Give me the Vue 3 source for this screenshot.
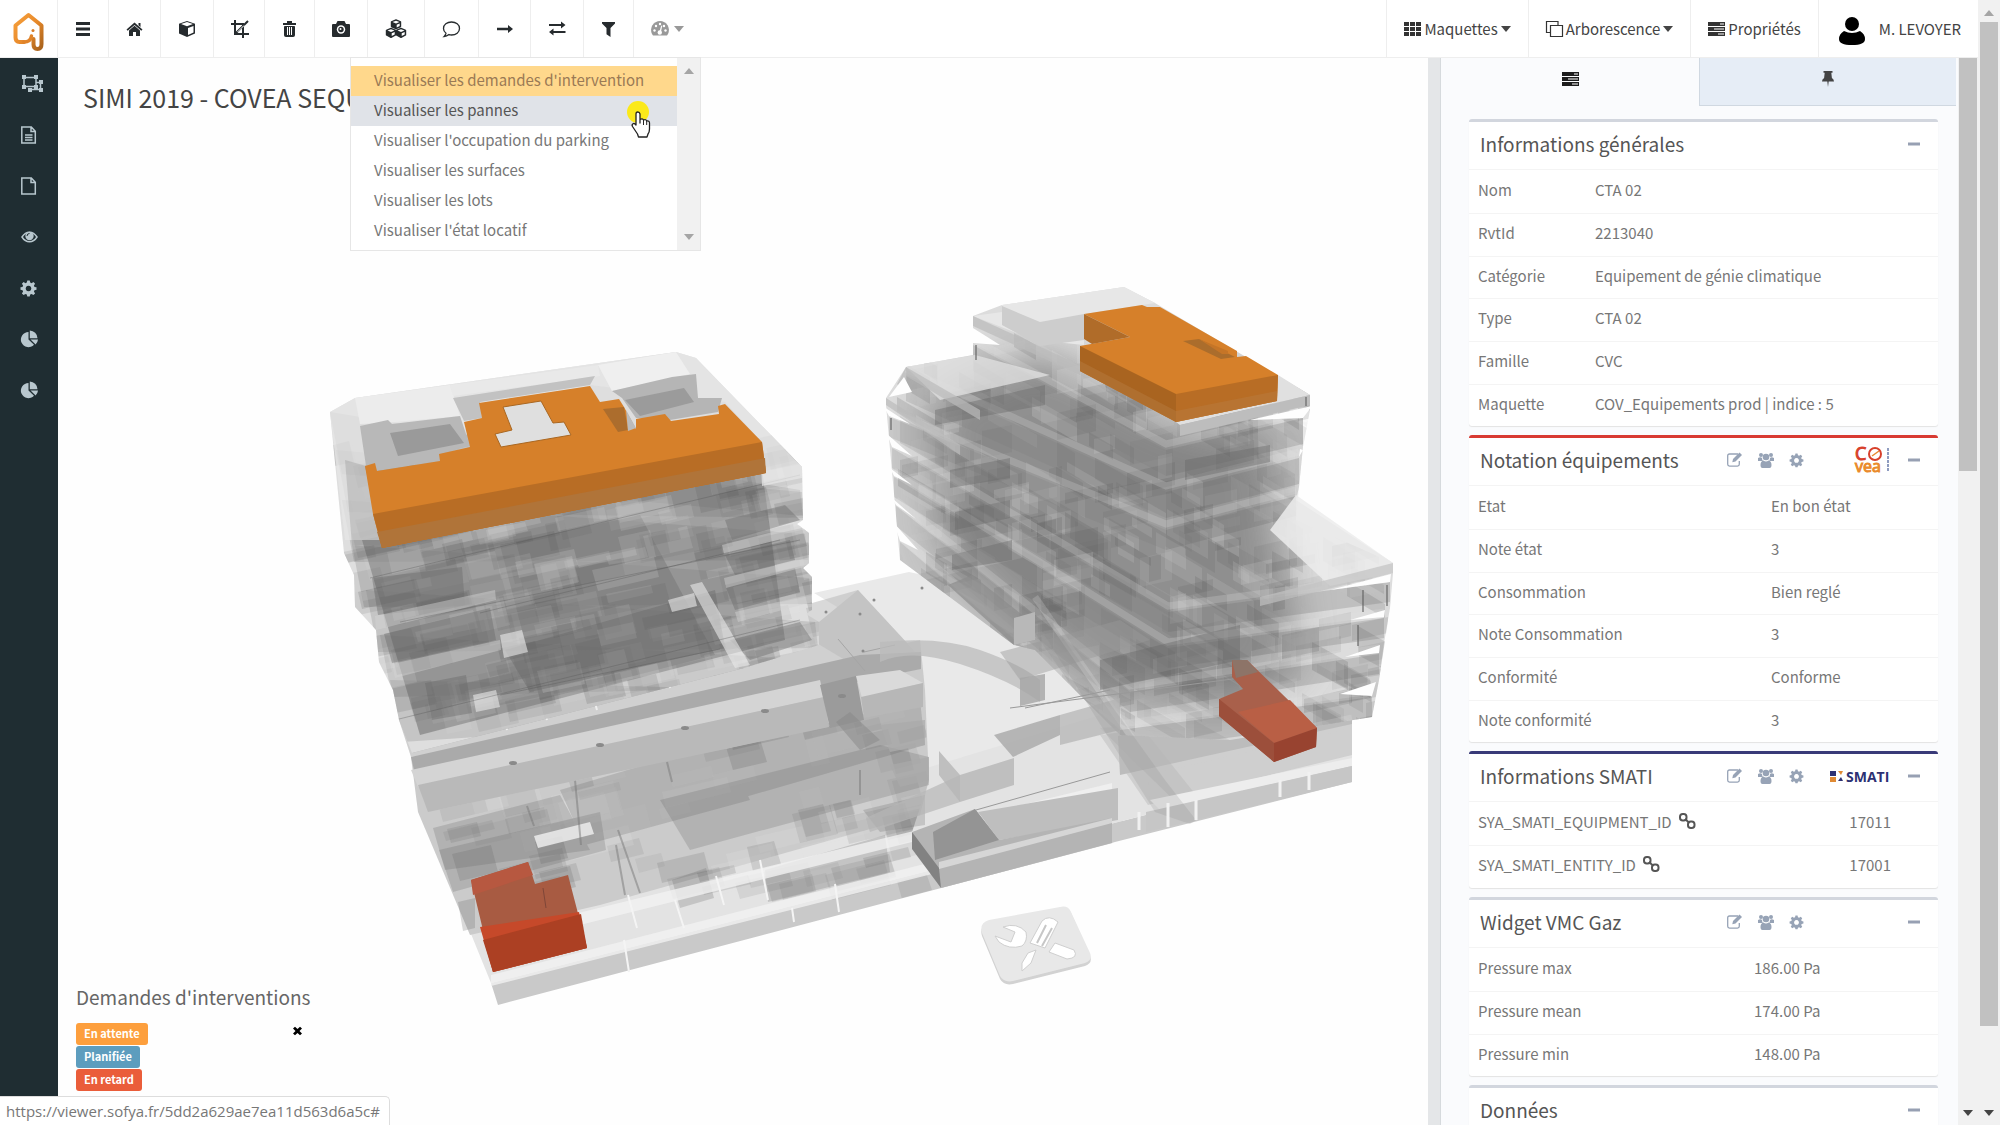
<script setup>
import { ref } from 'vue'

const icons = {
  menu: '<path d="M0 2h14v3H0zM0 7.500h14v3H0zM0 13h14v3H0z"/>',
  home: '<path d="M7.500 2.500l8 7-1.200 1.300L7.500 5 .7 10.800-.5 9.500zM11.500 3h2v4l-2-1.800zM2 10.500l5.500-4.700 5.500 4.700V16H9v-4H6v4H2z"/>',
  cube: '<path d="M8 1l8 2.800v9.700L8 17l-8-3.500V3.800z"/><path d="M2 4l6-2 6 2-6 2.200zM9 8l5.500-2v6.500L9 15z" fill="#fff"/>',
  crop: '<path d="M3 0v14h14M-1 4h12v14M4 13L16 1" fill="none" stroke="currentColor" stroke-width="2"/><path d="M5.500 12L12 5.500" stroke="#fff"/>',
  trash: '<path d="M0 3h13v2H0zM4 3V1h5v2" /><path d="M1.500 6.500h10v9q0 1-1 1h-8q-1 0-1-1zM4.500 7.500v7M6.500 7.500v7M8.500 7.500v7" stroke="currentColor"/><path d="M4.500 7v8M6.500 7v8M8.500 7v8" stroke="#fff" stroke-width="1"/>',
  camera: '<path d="M0 4h3l1.500-3h7L13 4h3q1 0 1 1v11q0 1-1 1H0q-1 0-1-1V5q0-1 1-1z"/><circle cx="8" cy="9.500" r="4.200" fill="#fff"/><circle cx="8" cy="9.500" r="2.700"/><circle cx="7.500" cy="9" r="1" fill="#fff"/>',
  cubes: '<g stroke="currentColor" stroke-width="1.400" stroke-linejoin="round"><path d="M10 0l4.500 1.800v4.700L10 8.700 5.500 6.500V1.800z"/><path d="M5 8.500l4.500 1.800V15L5 17.300.5 15v-4.700zM15 8.500l4.500 1.800V15L15 17.300 10.500 15v-4.700z"/></g><path d="M6.500 2L10 .7 13.500 2 10 3.400zM10.700 4.800l3-1.200V6l-3 1.400zM1.500 10.500L5 9.200l3.500 1.300L5 12zM5.700 13.200l3-1.200v2.500l-3 1.400zM11.500 10.500L15 9.200l3.500 1.300L15 12zM15.700 13.200l3-1.200v2.500l-3 1.400z" fill="#fff"/>',
  comment: '<path d="M8.500 2C13 2 16.500 4.700 16.500 8.500S13 15 8.500 15q-1.400 0-2.500-.4Q3.700 16.500 1 16.600 2.700 15 3 13.200 .5 11.500 .5 8.500C.5 4.700 4 2 8.500 2z" fill="none" stroke="currentColor" stroke-width="1.300"/>',
  arrow: '<path d="M0 7.800h11V5l5 4-5 4v-2.800H0z"/>',
  swap: '<path d="M0 4h12V1.500L16.500 5 12 8.500V6H0zM16.500 11h-12V8.500L0 12l4.500 3.500V13h12z"/>',
  filter: '<path d="M0 2h13v1.500L8.500 8v9l-4-2.800V8L0 3.500z"/>',
  gauge: '<path d="M9 1a9 9 0 0 1 8 13l-1 1.500H2L1 14A9 9 0 0 1 9 1z"/><g fill="#fff"><circle cx="3.500" cy="10.500" r="1.200"/><circle cx="5" cy="6" r="1.200"/><circle cx="9" cy="4" r="1.200"/><circle cx="13" cy="6" r="1.200"/><circle cx="14.500" cy="10.500" r="1.200"/><circle cx="8.800" cy="12.500" r="2.200"/><path d="M8.300 12l2-6.500 1 .3-1.500 6.500z"/></g>',
  grid: '<path d="M0 2h5v4H0zM6 2h5v4H6zM12 2h5v4h-5zM0 7h5v4H0zM6 7h5v4H6zM12 7h5v4h-5zM0 12h5v4H0zM6 12h5v4H6zM12 12h5v4h-5z"/>',
  copy: '<path d="M4.500 5.500h12v11h-12zM4.500 12.500h-4v-11h11.500v4" fill="none" stroke="currentColor" stroke-width="1.200"/>',
  server: '<path d="M0 2h17v4H0zM0 7h17v4H0zM0 12h17v4H0z"/><path d="M12 3.500h4v1h-4zM6 8.500h10v1H6zM10 13.500h6v1h-6z" fill="#fff"/>',
  pin: '<path d="M1.500 1h9v1.800H9.300l.6 5.200Q12 9.200 12 11.500H6.700L6 17l-.7-5.500H0Q0 9.200 2.100 8l.6-5.200H1.500z"/>',
  group: '<path d="M3 2.500h12v9H3zM9 14.500h10.500v-7H15" fill="none" stroke="currentColor" stroke-width="1.500"/><path d="M1 0h4v4H1zM13 0h4v4h-4zM1 10h4v4H1zM13 10h4v4h-4zM18 5h4v4h-4zM18 13h4v4h-4zM7 13h4v4H7z"/>',
  doc: '<path d="M.8 1h9.500l4 4.200V17H.8zM10 1v4.500h4.300M4 9h7.500M4 11.500h7.500M4 14h7.500" fill="none" stroke="currentColor" stroke-width="1.500"/>',
  file: '<path d="M.8 1h9.500l4 4.200V17H.8zM10 1v4.500h4.300" fill="none" stroke="currentColor" stroke-width="1.500"/>',
  eye: '<path d="M1 9q3-4.800 7.500-4.800T16 9q-3 4.800-7.500 4.800T1 9z" fill="none" stroke="currentColor" stroke-width="1.500"/><circle cx="8.500" cy="8" r="4.200"/><path d="M6 8q0-2.500 2.500-2.500" fill="none" stroke="#1f2d32"/>',
  gear: '<path fill-rule="evenodd" d="M6.300 1.500h2.400l.5 2.100 1.300.6 1.900-1.200 1.700 1.700-1.200 1.900.6 1.300 2 .4v2.500l-2 .5-.6 1.300 1.200 1.800-1.700 1.700-1.900-1.100-1.300.5-.5 2H6.300l-.5-2-1.300-.5-1.900 1.100-1.700-1.700 1.200-1.800-.6-1.300-2-.5V8.300l2-.4.6-1.300L.9 4.700 2.600 3l1.900 1.200 1.300-.6zM7.500 6.700a2.800 2.800 0 1 0 .01 0z"/>',
  pie: '<path d="M7.500 2v7.500l5.500 5.300A7.600 7.600 0 1 1 7.500 2zM8.800.5a8 8 0 0 1 7.700 7.700H8.800zM9.500 9.500H17a8 8 0 0 1-2.400 5z"/>',
  edit: '<path d="M11 3H2.500Q.7 3 .7 4.800v8.500q0 1.800 1.800 1.800h8q1.800 0 1.800-1.800V10" fill="none" stroke="currentColor" stroke-width="1.300"/><path d="M12.500 1.500L15 4l-6.500 6.500L5.300 11.200 6 8z"/>',
  users: '<circle cx="3" cy="4" r="2"/><circle cx="13" cy="4" r="2"/><circle cx="8" cy="6" r="3.300"/><path d="M0 7q2.500-1.500 4 0 0 2 1 3H0zM16 7q-2.500-1.500-4 0 0 2-1 3h5zM5.500 9.500q2.500 1.800 5 0Q13.500 10 13.500 14q0 3-2 3h-7q-2 0-2-3 0-4 3-4.500z"/>',
  minus: '<path d="M0 7.500h12v3H0z"/>',
  link: '<g fill="none" stroke="currentColor" stroke-width="2"><rect x="1" y="2" width="6.500" height="6.500" rx="2.800"/><rect x="9" y="9.500" width="6.500" height="6.500" rx="2.800"/><path d="M6 7l4.500 4"/></g>',
  close: '<path d="M0 2.500L2 .8 4.500 3 7 .8l2 1.700L6.500 5 9 7.500l-2 1.700L4.500 7 2 9.200 0 7.500 2.500 5z"/>',
}

const tools = [
  ['home', 15, 'Accueil'], ['cube', 16, 'Vue 3D'], ['crop', 14, 'Coupe'], ['trash', 13, 'Supprimer'],
  ['camera', 16, 'Capture'], ['cubes', 20, 'Objets'], ['comment', 17, 'Commentaire'], ['arrow', 15, 'Suivant'],
  ['swap', 16, 'Comparer'], ['filter', 13, 'Filtrer'],
]
const side = [
  ['group', 22, 'Sélection'], ['doc', 15, 'Document'], ['file', 15, 'Fichier'], ['eye', 17, 'Affichage'],
  ['gear', 15, 'Réglages'], ['pie', 17, 'Statistiques'], ['pie', 17, 'Rapports'],
]
const views = [
  ["Visualiser les demandes d'intervention", 'current'],
  ['Visualiser les pannes', 'hover'],
  ["Visualiser l'occupation du parking", ''],
  ['Visualiser les surfaces', ''],
  ['Visualiser les lots', ''],
  ["Visualiser l'état locatif", ''],
]
const cards = ref([
  { title: 'Informations générales', kind: 'general', rows: [['Nom', 'CTA 02'], ['RvtId', '2213040'], ['Catégorie', 'Equipement de génie climatique'], ['Type', 'CTA 02'], ['Famille', 'CVC'], ['Maquette', 'COV_Equipements prod | indice : 5']] },
  { title: 'Notation équipements', kind: 'rating', tools: true, logo: 'covea', rows: [['Etat', 'En bon état'], ['Note état', '3'], ['Consommation', 'Bien reglé'], ['Note Consommation', '3'], ['Conformité', 'Conforme'], ['Note conformité', '3']] },
  { title: 'Informations SMATI', kind: 'smati', tools: true, logo: 'smati', link: true, rows: [['SYA_SMATI_EQUIPMENT_ID', '17011'], ['SYA_SMATI_ENTITY_ID', '17001']] },
  { title: 'Widget VMC Gaz', kind: 'gas', tools: true, rows: [['Pressure max', '186.00 Pa'], ['Pressure mean', '174.00 Pa'], ['Pressure min', '148.00 Pa']] },
  { title: 'Données', kind: 'data', rows: [] },
])

// Rooms seen through the translucent storeys: seeded so that every render is alike.
let seed = 11
const rnd = () => (seed = (seed * 16807) % 2147483647) / 2147483647
function rooms(n, box, dirs, size, dark) {
  const out = []
  for (let i = 0; i < n; i++) {
    const [dx, dy, vx] = dirs[Math.floor(rnd() * dirs.length)]
    const x = box[0] + rnd() * box[2]
    const y = box[1] + rnd() * box[3]
    const w = size * (0.3 + rnd())
    const h = 8 + rnd() * 22
    const tone = rnd() < dark ? '#555' : '#e6e6e6'
    const pts = [[x, y], [x + w * dx, y + w * dy], [x + w * dx + h * vx, y + w * dy + h], [x + h * vx, y + h]]
    out.push({ p: pts.map((q) => q.map(Math.round).join(',')).join(' '), f: tone, o: 0.07 + rnd() * 0.13 })
  }
  return out
}
const leftRooms = rooms(320, [330, 440, 480, 270], [[1, -0.22, 0.25]], 56, 0.58)
const baseRooms = rooms(110, [430, 700, 500, 190], [[1, -0.24, 0.28]], 52, 0.6)
const rightRooms = rooms(460, [890, 330, 480, 390], [[1, -0.22, 0], [1, 0.58, 0]], 38, 0.55)

// One storey: left end, front corner, right end, height.
function storey(lx, ly, cx, cy, rx, ry, h) {
  return {
    left: `${lx},${ly} ${cx},${cy} ${cx},${cy + h} ${lx},${ly + h}`,
    right: `${cx},${cy} ${rx},${ry} ${rx},${ry + h} ${cx},${cy + h}`,
    gap: `${lx},${ly - 6} ${cx},${cy - 6} ${rx},${ry - 6}`,
  }
}
const storeys = [
  storey(973, 345, 1166, 450, 1303, 418, 26), storey(906, 375, 1166, 492, 1299, 458, 26),
  storey(889, 417, 1166, 530, 1296, 496, 20), storey(892, 448, 1168, 612, 1390, 582, 20),
  storey(894, 477, 1168, 648, 1384, 618, 20), storey(896, 506, 1130, 692, 1379, 654, 20),
  storey(900, 542, 1120, 730, 1372, 697, 22), storey(1035, 603, 1150, 770, 1352, 724, 30),
]
const slabs = [
  [330, 412, 803, 490], [336, 450, 805, 492], [342, 500, 808, 534], [352, 545, 812, 578], [366, 590, 818, 622], [380, 635, 818, 660], [390, 680, 790, 690],
].map(([x, y, rx, ry]) => `${x},${y} ${x + 12},${y + 62} ${rx},${ry + 26} ${rx - 3},${ry}`)
</script>

<template>
  <div class="app">
    <div class="page">
      <header class="topbar">
        <a class="brand" href="#" aria-label="Accueil">
          <svg width="34" height="40" viewBox="0 0 34 40">
            <defs><linearGradient id="brand" x2="1" y2="1"><stop offset="0" stop-color="#f6a03c" /><stop offset=".5" stop-color="#e88a2b" /><stop offset="1" stop-color="#a8621c" /></linearGradient></defs>
            <path d="M12 30H7.500Q3.500 30 3.500 25.500V13.500L16.500 3 29.500 13.500V32q0 5-4 5t-4-4.500V27" fill="none" stroke="url(#brand)" stroke-width="4" stroke-linejoin="round" stroke-linecap="round" />
            <path d="M12 30q6.500 0 7.500-6" fill="none" stroke="#e08329" stroke-width="3.500" stroke-linecap="round" /><circle cx="21" cy="18.500" r="1.500" fill="#d77c26" />
          </svg>
        </a>
        <nav class="tools">
          <button class="tool" aria-label="Menu"><svg class="icon" width="14" height="18" viewBox="0 0 14 18" v-html="icons.menu" /></button>
          <button v-for="t in tools" :key="t[0]" class="tool" :aria-label="t[2]"><svg class="icon" :width="t[1]" height="18" :viewBox="`0 0 ${t[1]} 18`" v-html="icons[t[0]]" /></button>
          <div class="views">
            <button class="tool gauge" aria-label="Visualisations"><svg class="icon" width="18" height="18" viewBox="0 0 18 18" v-html="icons.gauge" /><i class="caret" /></button>
            <div class="menu">
              <ul>
                <li v-for="v in views" :key="v[0]"><a href="#" :class="v[1]">{{ v[0] }}</a></li>
              </ul>
              <div class="menu-scroll"><i class="up" /><i class="down" /></div>
              <svg class="pointer" width="34" height="42" viewBox="0 0 34 42">
                <circle cx="14" cy="14" r="11" fill="#fbe91a" />
                <path d="M12 16q0-2 1.800-2T16 16v9-3.500q2.500-1.500 3.500.5 2.500-1 3.200 1 2.800-.5 2.800 2v6q0 3-1.500 5l-1 3h-8.500l-1-3-5-7.500q-1-2 .5-2.800t3 1.300z" fill="#fff" stroke="#222" stroke-width="1.300" stroke-linejoin="round" />
                <path d="M19.500 22v5M22.700 23v4" stroke="#222" />
              </svg>
            </div>
          </div>
        </nav>
        <nav class="links">
          <button><svg class="icon" width="17" height="18" viewBox="0 0 17 18" v-html="icons.grid" />Maquettes<i class="caret" /></button>
          <button><svg class="icon" width="17" height="18" viewBox="0 0 17 18" v-html="icons.copy" />Arborescence<i class="caret" /></button>
          <button><svg class="icon" width="17" height="18" viewBox="0 0 17 18" v-html="icons.server" />Propriétés</button>
          <a class="user" href="#"><svg width="26" height="28" viewBox="0 0 26 28"><ellipse cx="13" cy="7" rx="7" ry="7" /><path d="M5 14q8 4 16 0 5 3 5 8 0 6-13 6T0 22q0-5 5-8z" /></svg>M. LEVOYER</a>
        </nav>
      </header>

      <div class="body">
        <nav class="sidebar">
          <button v-for="s in side" :key="s[2]" :aria-label="s[2]"><svg class="icon" :width="s[1]" height="18" :viewBox="`0 0 ${s[1]} 18`" v-html="icons[s[0]]" /></button>
        </nav>

        <main class="viewer">
          <svg class="scene" viewBox="58 58 1370 1067" preserveAspectRatio="xMidYMid slice" role="img" aria-label="Maquette 3D">
            <defs>
              <clipPath id="lt"><path d="M330 412L355 398 676 352 696 358 802 467 803 520 797 524 809 533V563L803 568 812 577V610L806 614 819 622V645L744 668 412 753 399 720 393 690 379 662 376 630 355 607 354 575 344 553z" /></clipPath>
              <clipPath id="lb"><path d="M428 812L827 727 923 683 929 780 912 832 932 890 498 1005 458 930z" /></clipPath>
              <clipPath id="rt"><path d="M1002 305L1124 287 1155 303 1310 395V410L1303 447 1299 487 1296 520 1393 563 1390 608 1379 680 1372 717 1230 740 1120 735 1035 650 1014 645 900 560 886 405 906 367 973 355 973 316z" /></clipPath>
              <filter id="haze"><feGaussianBlur stdDeviation="22" /></filter>
            </defs>

            <path d="M814 593L909 572 1040 600 1150 760 1113 843 941 888 925 780 920 657z" fill="#e9e9e9" />
            <path d="M491 983L1352 762 1352 782 1115 842 498 1005z" fill="#c9c9c9" />
            <path d="M458 902L920 770 1150 700 1352 724V762L491 983z" fill="#e3e3e3" />
            <path d="M1100 735L1352 700V755L1148 805z" fill="#cfcfcf" />
            <path d="M1118 736L1214 715V728L1352 700V724L1120 775z" fill="#bcbcbc" />
            <path d="M1148 775L1352 728V754L1150 803z" fill="#cfcfcf" />
            <path d="M1100 728L1140 725 1200 800 1194 820z" fill="#b5b5b5" fill-opacity=".4" />
            <path d="M1150 800L1352 758V766L1160 810z" fill="#ededed" />
            <path d="M1146 812L1352 766V782L1146 832z" fill="#c6c6c6" />

            <path d="M411 757L920 640 925 690 929 780 920 815 600 905 470 935 418 812z" fill="#cbcbcb" />
            <g clip-path="url(#lb)"><polygon v-for="(r, i) in baseRooms" :key="i" :points="r.p" :fill="r.f" :fill-opacity="r.o" /></g>
            <g fill="#666" fill-opacity=".24">
              <path d="M433 828L560 795 590 850 445 870zM560 790L722 742 750 800 585 845zM722 750L920 700 925 745 735 800z" />
              <path d="M439 850L600 812 606 850 453 892zM660 800L880 745 929 757V785L690 850z" />
              <path d="M765 870L885 835 890 872 768 902zM672 880L706 868 714 898 680 908z" />
              <path d="M863 810L925 795V825L880 832zM458 902L475 898V928L463 931z" />
            </g>
            <g fill="#f1f1f1" fill-opacity=".8">
              <path d="M570 915L885 838 1112 783V792L580 925z" /><path d="M491 975L932 862V874L491 986z" /><path d="M534 836L590 822 594 834 538 848z" />
            </g>
            <path d="M624 940L629 972M835 884L839 912M792 908L794 922M716 876L724 905M760 860L768 900M628 895L637 928M675 900L684 928" stroke="#f4f4f4" stroke-width="2" fill="none" />
            <path d="M527 806L534 826M575 780L581 845M618 830L640 893M667 762L672 782M860 795V770M545 768L551 780M616 845L625 895" stroke="#777" stroke-opacity=".5" stroke-width="2" fill="none" />

            <path d="M399 720L819 622 858 590 920 657 700 710 411 757z" fill="#d0d0d0" />
            <path d="M770 615L858 590 920 657 865 672z" fill="#b9b9b9" fill-opacity=".55" />
            <path d="M412 727L724 650 744 668 412 753z" fill="#ababab" />
            <path d="M411 757L860 655 921 652V669L414 770z" fill="#aaa" />
            <path d="M411 770L820 680 824 697 418 787z" fill="#d4d4d4" />
            <path d="M418 785L824 697 829 727 428 812z" fill="#b9b9b9" />
            <path d="M820 685L856 676 864 720 830 728z" fill="#9b9b9b" /><path d="M836 722L850 712 880 740 860 750z" fill="#888" fill-opacity=".5" />
            <path d="M856 676L900 670 923 683 862 698z" fill="#dadada" /><path d="M861 697L923 683V707L864 718z" fill="#b7b7b7" />
            <path d="M880 725L925 720V745L890 752zM890 765L929 757V780L900 787z" fill="#aaa" fill-opacity=".7" />
            <path d="M500 700L507 730M540 695L547 720M590 686L597 710M665 666L670 688" stroke="#eee" stroke-width="2" fill="none" />
            <path d="M838 639L865 671M864 652L895 645" stroke="#a5a5a5" fill="none" />
            <g fill="#8a8a8a"><ellipse cx="513" cy="763" rx="4" ry="2" /><ellipse cx="600" cy="745" rx="4" ry="2" /><ellipse cx="685" cy="728" rx="4" ry="2" /><ellipse cx="765" cy="711" rx="4" ry="2" /><ellipse cx="842" cy="696" rx="4" ry="2" /><circle cx="922" cy="588" r="1.500" /><circle cx="826" cy="612" r="1.500" /><circle cx="860" cy="614" r="1.500" /><circle cx="863" cy="651" r="1.500" /><circle cx="874" cy="600" r="1.500" /></g>

            <path d="M330 412L355 398 676 352 696 358 802 467 803 520 797 524 809 533 809 563 803 568 812 577 812 610 806 614 819 622 819 645 744 668 412 753 399 720 393 690 379 662 376 630 355 607 354 575 344 553z" fill="#dedede" />
            <g clip-path="url(#lt)">
              <path d="M362 540L760 455 785 640 420 735z" fill="#868686" fill-opacity=".7" />
              <path d="M500 545L640 515 715 655 540 700z" fill="#666" fill-opacity=".36" />
              <g fill="#777" fill-opacity=".24"><polygon v-for="s in slabs" :key="s" :points="s" /></g>
              <polygon v-for="(r, i) in leftRooms" :key="i" :points="r.p" :fill="r.f" :fill-opacity="r.o" />
              <g fill="#666" fill-opacity=".4">
                <path d="M372 578L462 567 465 605 378 615zM384 634L490 608 496 640 392 663zM425 683L466 675 472 713 432 720zM505 650L715 590 725 648 530 692z" />
                <path d="M730 640L800 622 812 640 750 660zM725 520L785 505 800 520 732 540zM725 555L790 540 795 560 735 575zM725 585L795 568 800 592 735 610z" />
              </g>
              <g fill="#e9e9e9" fill-opacity=".6"><path d="M500 635L522 630 528 652 504 658zM473 695L496 690 500 707 476 712zM690 585L702 582 750 665 735 668zM720 635L728 632 732 645 724 648zM668 600L694 593 697 606 672 612z" /></g>
              <g fill="#d5d5d5" fill-opacity=".45"><path d="M375 616L495 590 496 600 376 630zM392 664L500 640 501 650 395 678zM722 545L812 522V531L724 554zM724 578L815 556V564L726 588zM735 612L820 592V600L738 622z" /></g>
              <path d="M370 578L800 475M400 622L800 540M480 613L780 540M395 720L800 620M500 695L720 649" stroke="#555" stroke-opacity=".35" fill="none" />
            </g>
            <path d="M330 412L355 398 676 352 696 358 802 467V478L762 486 760 440 725 402 590 385 365 466 382 540 345 540z" fill="#e6e6e6" fill-opacity=".75" />
            <path d="M345 460L366 466 380 545 352 545z" fill="#888" fill-opacity=".3" />
            <path d="M355 398L450 385 460 416 385 423 360 424z" fill="#ececec" /><path d="M450 385L598 365 600 376 453 396z" fill="#e9e9e9" /><path d="M598 365L676 352 690 374 612 391z" fill="#efefef" />
            <path d="M360 426L388 420 392 424 460 416 470 446 440 454 440 461 377 471 366 466z" fill="#b8b8b8" /><path d="M390 433L450 424 464 443 398 456z" fill="#858585" fill-opacity=".6" />
            <path d="M453 398L595 376 590 385 480 402 482 418 464 421z" fill="#c2c2c2" />
            <path d="M612 391L672 377 696 374 698 398 722 398 718 412 670 420 636 418 622 398z" fill="#b5b5b5" /><path d="M625 400L684 388 694 402 640 416z" fill="#858585" fill-opacity=".55" />

            <path d="M365 466L375 463 377 471 440 461 439 454 470 447 464 422 482 418 479 403 590 386 600 402 619 399 624 407 636 429V419L665 414 671 421 719 414 718 406 725 404 762 442 766 473 382 548 373 514z" fill="#d6802a" />
            <path d="M373 514L762 442 766 473 382 548z" fill="#b86d25" /><path d="M377 532L765 458 766 473 382 548z" fill="#b07439" />
            <path d="M503 407L541 401 553 423 564 422 571 435 501 447 495 434 512 430z" fill="#dfdfdf" stroke="#a96722" stroke-width="1" />
            <path d="M603 409L624 407 628 430 618 432z" fill="#ac6d2d" /><path d="M626 410L636 428 628 431z" fill="#bbb" />

            <path d="M1002 305L1124 287 1155 303 1310 395V405L1303 418V447L1299 487 1296 500 1393 563V573L1390 608 1384 643 1379 680 1372 717 1230 740 1120 735 1035 650 1014 645 900 560 886 405 886 398 906 367 973 355V316z" fill="#dcdcdc" />
            <g clip-path="url(#rt)">
              <path d="M930 400L1040 350 1176 420 1270 440 1290 620 1300 660 1240 705 1110 690 1000 610 940 550z" fill="#757575" fill-opacity=".75" filter="url(#haze)" />
              <polygon v-for="(r, i) in rightRooms" :key="i" :points="r.p" :fill="r.f" :fill-opacity="r.o" />
              <g v-for="s in storeys" :key="s.left"><polyline :points="s.gap" fill="none" stroke="#e4e4e4" stroke-opacity=".22" stroke-width="7" /><polygon :points="s.left" fill="#777" fill-opacity=".2" /><polygon :points="s.right" fill="#666" fill-opacity=".24" /></g>
              <g fill="#666" fill-opacity=".4"><path d="M935 410L1045 385V405L935 425zM950 470L1010 458V478L950 488zM955 512L1010 500V518L955 530zM952 555L1012 540V560L952 570zM1100 660L1240 625V660L1100 690zM1185 460L1270 445V462L1185 480z" /></g>
            </g>
            <path d="M1296 495L1393 563V573L1330 586 1270 530z" fill="#ececec" fill-opacity=".85" /><path d="M1393 563V573L1260 606V597z" fill="#c2c2c2" fill-opacity=".7" />
            <path d="M973 316L1002 312V305L1124 287 1155 303 1084 314V345L1035 340z" fill="#e7e7e7" /><path d="M1002 306L1040 322 1084 314V340L1040 346 1002 325z" fill="#cdcdcd" />
            <path d="M906 367L975 355 1050 375 940 400z" fill="#dedede" fill-opacity=".8" /><path d="M906 367L980 410V420L906 376zM886 398L960 445V455L886 405zM973 316L1080 365V375L973 326z" fill="#bbb" fill-opacity=".7" />
            <path d="M1278 375L1310 395 1180 425 1176 422 1277 401z" fill="#e0e0e0" /><path d="M1310 395V405L1180 436V425z" fill="#bdbdbd" />
            <g fill="#fefefe"><path d="M1300 449L1299 457 1303 450zM1312 406L1303 418 1250 420zM1391 574L1390 582 1330 590zM1385 610L1384 617 1350 620zM1380 645L1379 653 1345 657zM1376 682L1372 696 1340 694zM884 407L889 416 910 424zM887 434L892 447 912 456zM890 468L894 476 912 485zM892 498L896 505 916 519zM894 523L900 541 918 550zM904 377L889 397 912 392zM973 328V343L1000 345z" /></g>
            <path d="M891 418V430M1306 397V406M1387 585V606M1363 590V612M1358 625V646M976 345V360" stroke="#666" stroke-opacity=".6" stroke-width="2" />

            <path d="M880 642Q940 636 980 650T1040 680V702Q1010 680 960 664T880 662z" fill="#bbb" fill-opacity=".75" />
            <path d="M948 585L972 575 1035 625V640L1014 645z" fill="#8c8c8c" fill-opacity=".7" /><path d="M1014 618L1035 612V640L1014 645z" fill="#b8b8b8" />
            <path d="M1000 652L1120 620 1150 640 1020 680z" fill="#999" fill-opacity=".45" /><path d="M1020 678L1045 674V700L1020 706z" fill="#a5a5a5" fill-opacity=".8" />
            <path d="M994 735L1060 715V735L1013 757z" fill="#a8a8a8" fill-opacity=".8" /><path d="M1060 715L1120 698V730L1060 745z" fill="#b2b2b2" fill-opacity=".7" /><path d="M939 751L960 775 1014 758V785L960 802 939 775z" fill="#bfbfbf" />
            <path d="M866 818L960 775V802L870 832z" fill="#b6b6b6" fill-opacity=".7" />
            <path d="M1035 620L1050 620 1165 780 1196 820 1190 824 1155 812z" fill="#888" fill-opacity=".2" />
            <path d="M976 810L1110 772M1010 708L1240 678M1025 708L1110 690" stroke="#999" fill="none" />
            <path d="M978 812L1118 788V820L999 840z" fill="#bebebe" />
            <path d="M912 832L975 809 999 840 1112 818V843L941 888z" fill="#b4b4b4" /><path d="M933 832L975 809 999 840 935 860z" fill="#949494" />
            <path d="M912 832L939 868 941 888 912 849z" fill="#828282" /><path d="M939 862L1112 818V823L939 869z" fill="#d6d6d6" />
            <path d="M1139 812V830M1168 803V827M1196 800V820M1280 780V797M1309 772V790" stroke="#f1f1f1" stroke-width="3" fill="none" />

            <path d="M1084 314L1142 305 1147 307 1160 307 1237 351V357L1246 356 1278 375 1277 401 1176 422 1080 371V346L1130 337z" fill="#d6802a" />
            <path d="M1084 314L1130 337 1092 344 1084 339z" fill="#b06c29" /><path d="M1080 346L1176 394V422L1080 371z" fill="#a96420" /><path d="M1176 394L1278 375 1277 401 1176 422z" fill="#b86d25" />
            <path d="M1183 341L1199 339 1235 357 1221 359z" fill="#ab6d2c" /><path d="M1199 339L1228 351V354L1222 354z" fill="#c57527" />
            <path d="M1080 361L1176 411 1277 391V401L1176 422 1080 371z" fill="#b98045" fill-opacity=".4" />

            <path d="M1232 660L1247 660 1280 692 1317 728 1316 747 1274 762 1219 716V699L1243 689 1232 677z" fill="#a9604b" />
            <path d="M1238 712L1290 700 1317 728 1274 743z" fill="#b95f45" /><path d="M1219 699L1274 743V762L1219 716z" fill="#9c4f3b" /><path d="M1274 743L1317 728 1316 747 1274 762z" fill="#984330" /><path d="M1232 660L1247 660 1258 672 1236 678z" fill="#8d7468" />
            <path d="M471 880L528 862 535 884 568 875 587 948 493 972z" fill="#a85b42" />
            <path d="M471 880L528 862 533 875 473 895z" fill="#b75840" /><path d="M480 927L579 912 587 948 493 972z" fill="#c6492a" /><path d="M483 940L581 914 587 948 493 972z" fill="#ac4023" />
            <path d="M543 888L546 908" stroke="#7f4638" fill="none" />

            <path d="M989 923L1060 908Q1068 906 1071 913L1090 956Q1093 963 1085 966L1013 984Q1004 986 1000 979L982 936Q979 926 989 923z" fill="#d2d2d2" /><path d="M989 920L1060 907Q1068 905 1071 912L1090 953Q1093 960 1085 963L1013 981Q1004 983 1000 976L982 933Q979 923 989 920z" fill="#e8e8e8" />
            <g fill="#fff" stroke="#cfcfcf" stroke-width="1"><path d="M1003 927Q1017 922 1026 932 1028 941 1022 946 1009 950 999 942L995 936 1011 942 1015 932z" /><path d="M1030 943L1042 921Q1049 914 1058 922L1045 948z" /><path d="M1049 952L1055 943 1074 950Q1079 958 1067 959z" /><path d="M1028 953L1036 950 1031 963 1022 971 1022 963z" /></g><path d="M1037 943L1046 925M1042 946L1052 928" stroke="#c7c7c7" stroke-width="2" />
          </svg>
          <div class="overlay">
            <h1>SIMI 2019 - COVEA SEQU</h1>
            <section class="legend">
              <h2>Demandes d'interventions</h2>
              <div class="legend-body">
                <ul><li class="wait">En attente</li><li class="plan">Planifiée</li><li class="late">En retard</li></ul>
                <button aria-label="Fermer"><svg class="icon" width="9" height="10" viewBox="0 0 9 10" v-html="icons.close" /></button>
              </div>
            </section>
          </div>
        </main>

        <div class="splitter" />

        <aside class="panel">
          <div class="tabs">
            <button class="tab on" aria-label="Propriétés"><svg class="icon" width="17" height="18" viewBox="0 0 17 18" v-html="icons.server" /></button>
            <button class="tab" aria-label="Épinglés"><svg class="icon" width="12" height="18" viewBox="0 0 12 18" v-html="icons.pin" /></button>
          </div>
          <section v-for="c in cards" :key="c.kind" class="card" :class="c.kind">
            <header>
              <h3>{{ c.title }}</h3>
              <div v-if="c.tools" class="card-tools">
                <button aria-label="Modifier"><svg class="icon" width="15" height="18" viewBox="0 0 15 18" v-html="icons.edit" /></button>
                <button aria-label="Groupes"><svg class="icon" width="16" height="18" viewBox="0 0 16 18" v-html="icons.users" /></button>
                <button aria-label="Réglages"><svg class="icon" width="13" height="16" viewBox="0 0 15 18" v-html="icons.gear" /></button>
              </div>
              <div class="logo">
                <svg v-if="c.logo === 'covea'" class="icon" width="35" height="26" viewBox="0 0 35 26" font-family="Open Sans, sans-serif">
                  <text x="0" y="13" font-size="18" fill="#d8402b" stroke="#d8402b">C</text><circle cx="20" cy="7" r="6" fill="none" stroke="#d8402b" stroke-width="2" /><path d="M17 9l7-5" stroke="#e8892f" stroke-width="1.500" />
                  <text x="0" y="25" font-size="16" fill="#ea8b2c" stroke="#ea8b2c">vea</text><path d="M33 1v24" stroke="#8f9cc0" stroke-width="2" stroke-dasharray="3 1" />
                </svg>
                <svg v-if="c.logo === 'smati'" width="60" height="18" viewBox="0 0 60 18" font-family="Open Sans, sans-serif" font-weight="bold">
                  <path d="M0 4h6v5H0zM8 14l3-4 2 4z" fill="#2d3173" /><path d="M0 10h6v5H0zM8 4h5l-2 4z" fill="#e08a34" /><text x="16" y="15" font-size="14" fill="#2d3173">SMATI</text>
                </svg>
              </div>
              <button class="fold" aria-label="Réduire"><svg class="icon" width="12" height="18" viewBox="0 0 12 18" v-html="icons.minus" /></button>
            </header>
            <table v-if="c.rows.length">
              <tbody>
                <tr v-for="r in c.rows" :key="r[0]">
                  <th scope="row">{{ r[0] }}<svg v-if="c.link" class="icon link" width="16" height="18" viewBox="0 0 16 18" v-html="icons.link" /></th>
                  <td>{{ r[1] }}</td>
                </tr>
              </tbody>
            </table>
          </section>
        </aside>
        <div class="scroll inner"><i class="thumb" /><i class="down" /></div>
      </div>
    </div>
    <div class="scroll outer"><i class="up" /><i class="thumb" /><i class="down" /></div>
    <div class="status">https://viewer.sofya.fr/5dd2a629ae7ea11d563d6a5c#</div>
  </div>
</template>

<style>
body { margin: 0; overflow: hidden; }
</style>

<style scoped>
.app { position: relative; display: flex; height: 100vh; overflow: hidden; background: #fefefe; color: #555; font: 15px/24px "Noto Sans CJK SC", sans-serif; }
.app * { box-sizing: border-box; }
button { border: 0; background: none; padding: 0; font: inherit; color: inherit; cursor: pointer; }
a { color: inherit; text-decoration: none; }
ul { list-style: none; margin: 0; padding: 0; }
h1, h2, h3 { margin: 0; font-weight: 400; white-space: nowrap; }
.icon { fill: currentColor; overflow: visible; flex: none; }
.page { flex: 1; min-width: 0; display: flex; flex-direction: column; }
.topbar { display: flex; flex: none; height: 58px; border-bottom: 1px solid #eee; background: #fff; }
.brand { width: 58px; padding: 12px 0 0 12px; border-right: 1px solid #eee; }
.tools { display: flex; color: #262b2e; }
.tool { display: flex; align-items: center; padding: 0 18px; border-right: 1px solid #eee; }
.views { position: relative; display: flex; }
.gauge { border: 0; color: #999; gap: 5px; width: 67px; padding: 0 0 0 17px; }
.caret { flex: none; border: 5px solid transparent; border-top: 6px solid; border-bottom: 0; }
.menu { position: absolute; z-index: 2; top: 57px; right: 0; width: 351px; height: 194px; display: flex; background: #fff; border: 1px solid #e6e6e6; color: #777; }
.menu ul { flex: 1; padding-top: 8px; }
.menu a { display: block; padding: 2px 23px 4px; white-space: nowrap; }
.menu .current { background: #ffd88c; color: #9a7a55; }
.menu .hover { background: #e0e3e8; color: #555; }
.menu-scroll { width: 23px; background: #f1f1f1; display: flex; flex-direction: column; align-items: center; justify-content: space-between; padding: 10px 0; color: #a5a5a5; }
.up { flex: none; border: 5px solid transparent; border-bottom: 6px solid; border-top: 0; }
.down { flex: none; border: 5px solid transparent; border-top: 6px solid; border-bottom: 0; }
.pointer { position: absolute; left: 273px; top: 40px; }
.links { display: flex; margin-left: auto; color: #444; }
.links button, .user { display: flex; align-items: center; gap: 3px; padding: 0 17px; border-left: 1px solid #eee; }
.links .icon { color: #333; }
.user { gap: 14px; padding: 0 17px 0 20px; }
.user svg { fill: #000; margin-top: 4px; }
.body { flex: 1; min-height: 0; display: flex; }
.sidebar { width: 58px; flex: none; background: #1f2d32; color: #b8c7ce; }
.sidebar button { display: flex; align-items: center; width: 58px; height: 51px; padding-left: 21px; }
.viewer { flex: 1; min-width: 0; display: grid; overflow: hidden; }
.scene { grid-area: 1 / 1; width: 100%; height: 100%; min-height: 0; }
.overlay { grid-area: 1 / 1; display: flex; flex-direction: column; justify-content: space-between; padding: 23px 0 34px 18px; }
h1 { padding-left: 7px; font-size: 25px; line-height: 32px; color: #444; }
.legend { width: 240px; }
h2 { font-size: 19px; line-height: 28px; color: #666; padding-bottom: 12px; }
.legend-body { display: flex; justify-content: space-between; align-items: flex-start; }
.legend ul { display: flex; flex-direction: column; align-items: flex-start; gap: 1px; }
.legend li { height: 22px; padding: 0 8px; border-radius: 3px; color: #fff; font: bold 11px/20px "Noto Sans CJK SC", sans-serif; }
.wait { background: #fd9f3d; }
.plan { background: #5d9dbe; }
.late { background: #ea5d3a; }
.legend button { display: flex; align-items: center; color: #000; height: 16px; width: 23px; }
.splitter { width: 13px; flex: none; background: #e4e6e8; border-right: 1px solid #d6dadd; }
.panel { width: 517px; flex: none; overflow: hidden; background: #fafbfd; }
.tabs { display: flex; height: 48px; margin-bottom: 13px; padding-right: 2px; }
.tab { flex: 1; background: #e6edf6; border: solid #d0d8e1; border-width: 0 0 1px 1px; color: #444; }
.tab.on { background: #fafbfd; border-color: transparent; color: #1c1c1c; }
.card { margin: 0 20px 9px 28px; border-top: 3px solid #d2d6de; border-radius: 3px; background: #fff; box-shadow: 0 1px 1px #e3e3e3; }
.card header { display: flex; align-items: center; height: 48px; padding: 0 18px 3px 11px; border-bottom: 1px solid #f4f4f4; }
h3 { width: 247px; font-size: 19px; line-height: 28px; }
.card-tools { display: flex; align-items: center; gap: 16px; color: #97a3b6; }
.card-tools button, .fold { display: flex; align-items: center; }
.logo { flex: 1; display: flex; justify-content: flex-end; padding-right: 18px; }
.fold { color: #97a0b3; }
.rating { border-color: #d83a32; }
.smati { border-color: #393a78; }
table { width: 100%; border-spacing: 0; color: #777; table-layout: fixed; }
tr { height: 43px; }
tr:nth-child(3n) { height: 42px; }
th, td { padding: 0 0 4px; font-weight: 400; text-align: left; border-top: 1px solid #f4f4f4; }
tr:first-child > * { border-top: 0; }
th { width: 126px; padding-left: 9px; }
.rating th, .smati th { width: 302px; }
.smati td { text-align: right; padding-right: 47px; }
.gas th { width: 285px; }
.link { margin-left: 7px; color: #555; vertical-align: -2px; }
.scroll { flex: none; display: flex; flex-direction: column; align-items: center; background: #f1f1f1; color: #444; padding-bottom: 9px; }
.scroll .thumb { width: 18px; background: #c1c1c1; }
.scroll .down { margin-top: auto; }
.inner { width: 20px; }
.inner .thumb { flex: 0 0 39%; }
.outer { width: 22px; }
.outer .up { margin: 10px 0 6px; color: #a5a5a5; }
.outer .thumb { flex: 0 0 90%; }
.status { position: absolute; left: 0; bottom: 0; padding: 2px 9px 2px 6px; height: 29px; border: 1px solid #ddd; border-width: 1px 1px 0 0; border-radius: 0 5px 0 0; background: #fff; color: #777; font: 15px/24px "Open Sans", sans-serif; }
</style>
